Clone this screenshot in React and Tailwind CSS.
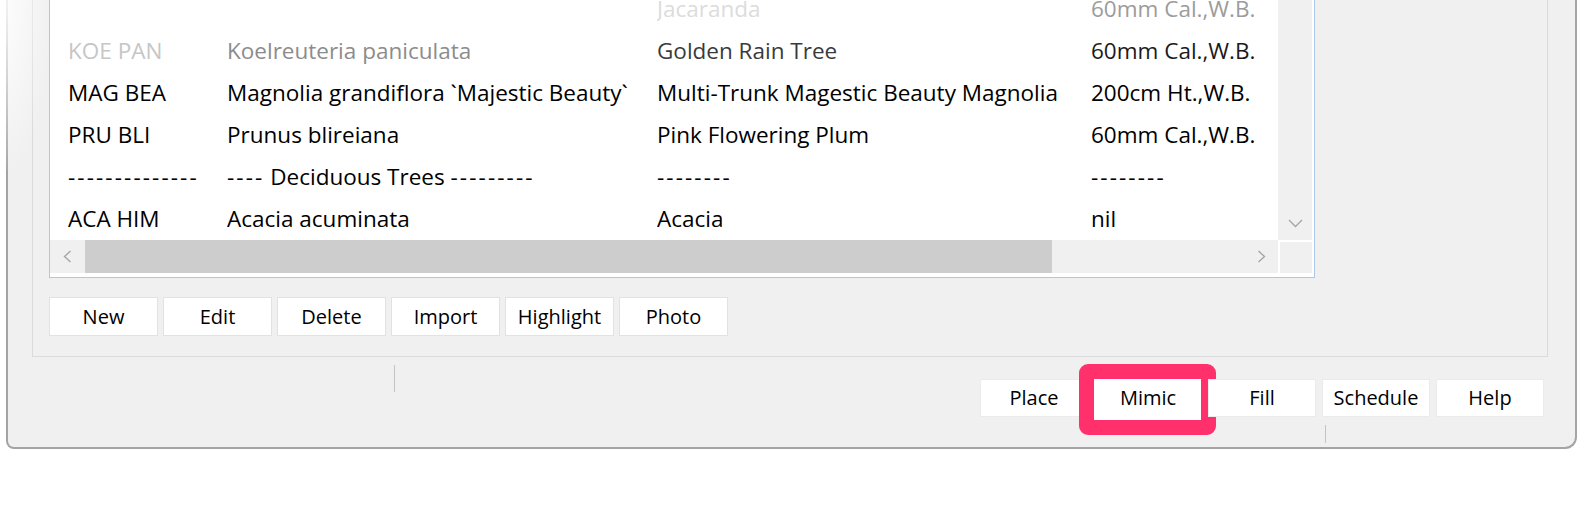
import React from 'react';

const ROWS = [
  { cells: ['', '', 'Jacaranda', '60mm Cal.,W.B.'], tones: ['', '', 'text-[#dcdcdc]', 'text-[#9c9c9c]'] },
  { cells: ['KOE PAN', 'Koelreuteria paniculata', 'Golden Rain Tree', '60mm Cal.,W.B.'], tones: ['text-[#c6c6c6]', 'text-[#8c8c8c]', 'text-[#3a3a3a]', 'text-[#1a1a1a]'] },
  { cells: ['MAG BEA', 'Magnolia grandiflora `Majestic Beauty`', 'Multi-Trunk Magestic Beauty Magnolia', '200cm Ht.,W.B.'] },
  { cells: ['PRU BLI', 'Prunus blireiana', 'Pink Flowering Plum', '60mm Cal.,W.B.'] },
  { cells: ['--------------', '---- Deciduous Trees ---------', '--------', '--------'] },
  { cells: ['ACA HIM', 'Acacia acuminata', 'Acacia', 'nil'] },
];

const TOOLS = ['New', 'Edit', 'Delete', 'Import', 'Highlight', 'Photo'];
const ACTIONS = ['Place', 'Mimic', 'Fill', 'Schedule', 'Help'];

// dash runs in the list are wider in the original font
function CellText({ text }) {
  return text.split(/(-{2,})/).map((part, i) =>
    /^-{2,}$/.test(part) ? (
      <span key={i} className="tracking-[2.1px]">{part}</span>
    ) : (
      <React.Fragment key={i}>{part}</React.Fragment>
    )
  );
}

const Chevron = ({ dir }) => {
  if (dir === 'down')
    return (
      <svg width="15" height="9" viewBox="0 0 15 9" fill="none">
        <polyline points="1,1 7.5,7.5 14,1" stroke="#a6a6a6" strokeWidth="1.4" />
      </svg>
    );
  return (
    <svg width="9" height="13" viewBox="0 0 9 13" fill="none">
      <polyline
        points={dir === 'left' ? '7.5,1 1.5,6.5 7.5,12' : '1.5,1 7.5,6.5 1.5,12'}
        stroke="#a6a6a6"
        strokeWidth="1.4"
      />
    </svg>
  );
};

export default function App() {
  return (
    <div className="relative w-[1586px] h-[508px] bg-white overflow-hidden font-['Open_Sans',sans-serif] text-black">
      {/* window */}
      <div className="ml-[6px] w-[1571px] h-[449px] bg-[#f0f0f0] border-x-2 border-b-2 border-[#a4a4a4] rounded-bl-[8px] rounded-br-[12px] flex flex-col">
        {/* group box */}
        <div className="ml-[24px] w-[1516px] h-[357px] border-x border-b border-[#dadada] flex flex-col">
          {/* list view */}
          <div className="ml-[16px] w-[1266px] h-[278px] shrink-0 bg-white border-x border-b border-[#abc8e6] pr-[2px] pb-[4px] flex flex-col">
            <div className="flex h-[240px]">
              <div className="w-[1228px] overflow-hidden">
                <div className="-mt-[12px]">
                  {ROWS.map((row, r) => (
                    <div key={r} className="grid grid-cols-[159px_430px_434px_1fr] h-[42px] leading-[42px] pl-[18px] text-[22.5px]">
                      {row.cells.map((c, i) => (
                        <div key={i} className={`whitespace-nowrap overflow-hidden ${row.tones ? row.tones[i] : ''}`}>
                          <CellText text={c} />
                        </div>
                      ))}
                    </div>
                  ))}
                </div>
              </div>
              <div className="w-[34px] bg-[#f0f0f0] flex flex-col justify-end">
                <div className="h-[34px] flex items-center justify-center">
                  <Chevron dir="down" />
                </div>
              </div>
            </div>
            <div className="flex h-[33px]">
              <div className="w-[1228px] bg-[#f0f0f0] flex">
                <div className="w-[35px] flex items-center justify-center">
                  <Chevron dir="left" />
                </div>
                <div className="w-[967px] bg-[#cdcdcd]" />
                <div className="flex-1" />
                <div className="w-[33px] flex items-center justify-center">
                  <Chevron dir="right" />
                </div>
              </div>
              <div className="ml-[2px] mt-[2px] w-[32px] bg-[#f0f0f0]" />
            </div>
          </div>

          {/* list tools */}
          <div className="mt-[19px] ml-[16px] flex gap-[5px]">
            {TOOLS.map((t) => (
              <div key={t} className="w-[109px] h-[39px] bg-white border border-[#e2e2e2] text-[20px] flex items-center justify-center">
                {t}
              </div>
            ))}
          </div>
        </div>

        {/* dialog actions */}
        <div className="mt-[22px] pr-[31px] flex justify-end gap-[6px]">
          {ACTIONS.map((a) => (
            <div key={a} className="relative w-[108px] h-[38px] bg-white border border-[#ebebeb] text-[20px] flex items-center justify-center">
              {a === 'Mimic' && (
                <div className="absolute -left-[16px] -top-[16px] -right-[15px] -bottom-[19px] border-[15px] border-[#ff306c] rounded-[9px] bg-white" />
              )}
              <span className="relative">{a}</span>
            </div>
          ))}
        </div>
      </div>

      {/* fade at the top-left corner of the capture */}
      <div className="pointer-events-none absolute left-0 top-0 w-[49px] h-[170px] bg-[radial-gradient(ellipse_at_top_left,rgba(255,255,255,0.95),rgba(255,255,255,0)_75%)]" />
      {/* capture artefacts */}
      <div className="absolute left-[394px] top-[365px] w-px h-[27px] bg-[#c4c4c4]" />
      <div className="absolute left-[1325px] top-[425px] w-px h-[18px] bg-[#c4c4c4]" />
    </div>
  );
}
